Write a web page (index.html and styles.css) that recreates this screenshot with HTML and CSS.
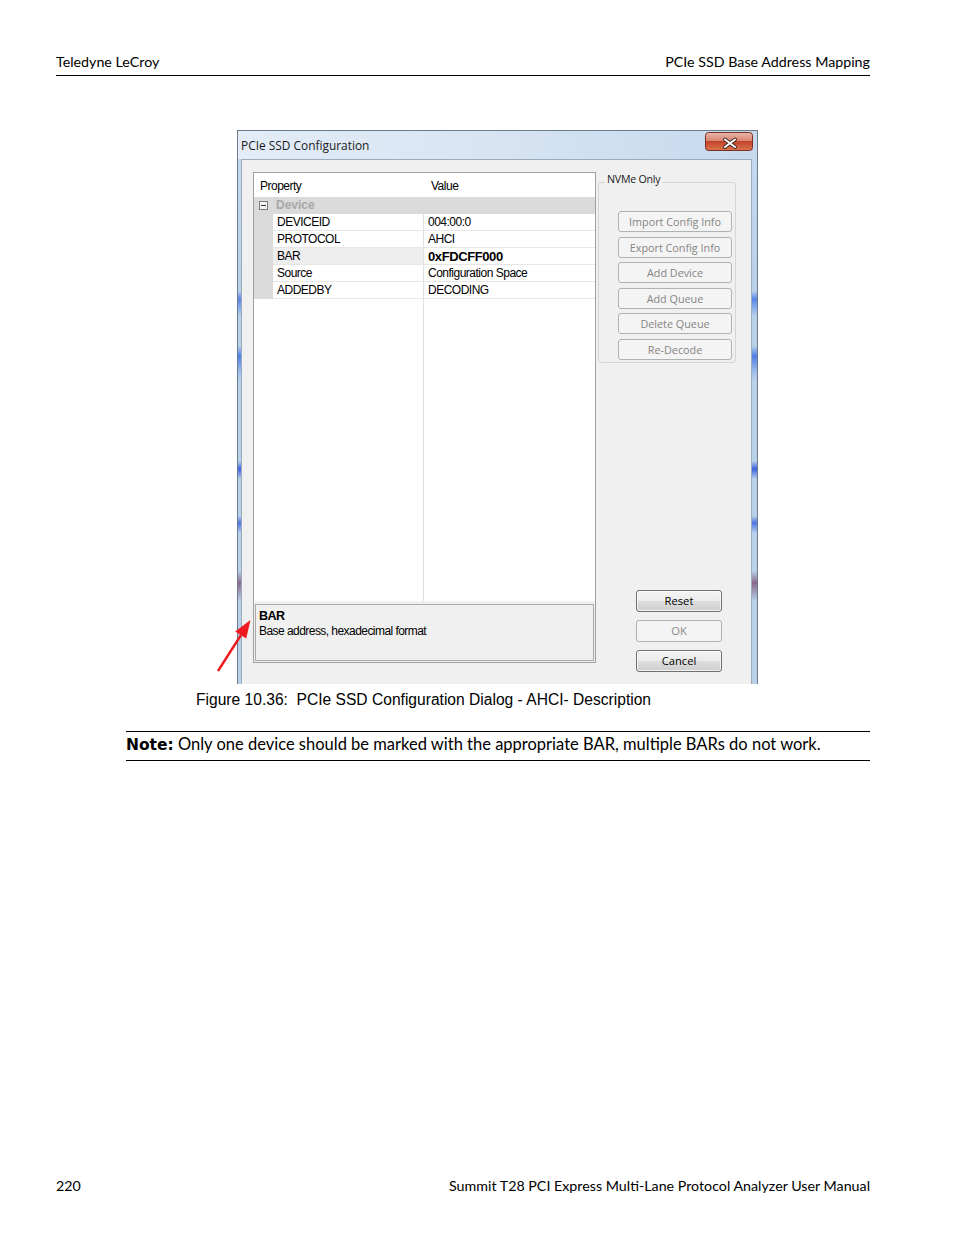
FILE: index.html
```html
<!DOCTYPE html>
<html lang="en">
<head>
<meta charset="utf-8">
<title>PCIe SSD Base Address Mapping</title>
<link rel="stylesheet" href="styles.css">
</head>
<body>
<div class="page">
  <header class="running-head"><span>Teledyne LeCroy</span><span>PCIe SSD Base Address Mapping</span></header>

  <div class="figure">
    <div class="dialog">
      <div class="titlebar">
        <span class="title">PCIe SSD Configuration</span>
        <div class="close">
          <svg width="48" height="19" viewBox="0 0 48 19">
            <defs>
              <linearGradient id="cg" x1="0" y1="0" x2="0" y2="1">
                <stop offset="0" stop-color="#ecb8ab"/>
                <stop offset="0.45" stop-color="#d98571"/>
                <stop offset="0.5" stop-color="#c4442b"/>
                <stop offset="1" stop-color="#d9744e"/>
              </linearGradient>
            </defs>
            <rect x="0.5" y="0.5" width="47" height="18" rx="3" fill="url(#cg)" stroke="#7a3124"/>
            <path d="M20 7.5 L30 15 M30 7.5 L20 15" stroke="#3d2019" stroke-width="3.8" stroke-linecap="round"/>
            <path d="M20 7.5 L30 15 M30 7.5 L20 15" stroke="#ffffff" stroke-width="2.1" stroke-linecap="round"/>
          </svg>
        </div>
      </div>
      <div class="client">
        <div class="grid-frame">
          <div class="grid">
            <div class="grid-head"><div class="hcell prop">Property</div><div class="hcell val">Value</div></div>
            <div class="cat-row"><span class="expander"></span><span class="cat-name">Device</span></div>
            <div class="row"><div class="gutter"></div><div class="cell name">DEVICEID</div><div class="cell value">004:00:0</div></div>
            <div class="row"><div class="gutter"></div><div class="cell name">PROTOCOL</div><div class="cell value">AHCI</div></div>
            <div class="row selected"><div class="gutter"></div><div class="cell name">BAR</div><div class="cell value strong">0xFDCFF000</div></div>
            <div class="row"><div class="gutter"></div><div class="cell name">Source</div><div class="cell value">Configuration Space</div></div>
            <div class="row"><div class="gutter"></div><div class="cell name">ADDEDBY</div><div class="cell value">DECODING</div></div>
            <div class="grid-empty"><div class="empty-left"></div><div class="empty-right"></div></div>
          </div>
          <div class="desc">
            <div class="desc-title">BAR</div>
            <div class="desc-text">Base address, hexadecimal format</div>
          </div>
        </div>
        <div class="side">
          <div class="group">
            <span class="group-label">NVMe Only</span>
            <button class="nbtn">Import Config Info</button>
            <button class="nbtn">Export Config Info</button>
            <button class="nbtn">Add Device</button>
            <button class="nbtn">Add Queue</button>
            <button class="nbtn">Delete Queue</button>
            <button class="nbtn">Re-Decode</button>
          </div>
          <div class="actions">
            <button class="btn">Reset</button>
            <button class="btn disabled">OK</button>
            <button class="btn">Cancel</button>
          </div>
        </div>
      </div>
    </div>
    <svg class="arrow" width="50" height="60" viewBox="0 0 50 60">
      <line x1="8" y1="56" x2="31" y2="20" stroke="#ee1a1f" stroke-width="2.4"/>
      <polygon points="40.5,5 25.2,16.6 36.2,23.6" fill="#ee1a1f"/>
    </svg>
  </div>

  <p class="caption">Figure 10.36:  PCIe SSD Configuration Dialog - AHCI- Description</p>

  <div class="note"><b class="note-label">Note:</b> Only one device should be marked with the appropriate BAR, multiple BARs do not work.</div>

  <footer class="running-foot"><span>220</span><span>Summit T28 PCI Express Multi-Lane Protocol Analyzer User Manual</span></footer>
</div>
</body>
</html>
```

FILE: styles.css
```css
body {
  margin: 0;
  background: #ffffff;
}

.page {
  width: 954px;
  height: 1235px;
  box-sizing: border-box;
  padding: 53px 84px 40px 56px;
  display: flex;
  flex-direction: column;
  font-family: Lato, "Open Sans", sans-serif;
  color: #000;
}

.running-head {
  display: flex;
  justify-content: space-between;
  font-size: 14.25px;
  line-height: 18px;
  padding-bottom: 4px;
  border-bottom: 1px solid #000;
}

.figure {
  position: relative;
  margin: 54px 0 0 181px;
  width: 521px;
}

.dialog {
  width: 521px;
  height: 554px;
  box-sizing: border-box;
  border: 1px solid #6b7a8c;
  border-bottom: none;
  display: flex;
  flex-direction: column;
  background: linear-gradient(to bottom,
    #d3e2f2 0, #c4d8ee 30px, #b9d0e9 160px,
    #5a86e8 168px, #8fb2ea 178px, #b9d0e9 185px,
    #b9d0e9 215px, #4f7fe6 225px, #9bbbe9 240px, #b9d0e9 250px,
    #b9d0e9 330px, #3d63e0 338px, #b9d0e9 348px,
    #b9d0e9 385px, #4a73e0 392px, #b9d0e9 402px,
    #b9d0e9 440px, #8a6a8a 452px, #b9d0e9 470px,
    #b9d0e9 100%);
}

.titlebar {
  height: 28px;
  flex: none;
  display: flex;
  justify-content: space-between;
  align-items: flex-start;
  padding: 0 4px 0 3px;
  background: linear-gradient(90deg, #e3ecf7 0%, #d8e5f3 45%, #c6d9ee 100%);
}

.title {
  font-family: "Open Sans", sans-serif;
  font-size: 11.9px;
  line-height: 28px;
  color: #1b1b1b;
}

.close {
  margin-top: 1px;
  width: 48px;
  height: 19px;
}

.close svg {
  display: block;
}

.client {
  flex: 1;
  margin: 0 5px 0 3px;
  border: 1px solid #9aabbd;
  border-bottom: none;
  background: #f0f0f0;
  display: flex;
  padding: 12px 0 0 11px;
}

.grid-frame {
  flex: none;
  width: 343px;
  height: 491px;
  box-sizing: border-box;
  border: 1px solid #a0a0a0;
  display: flex;
  flex-direction: column;
  background: #f0f0f0;
}

.grid {
  flex: 1;
  background: #ffffff;
  display: flex;
  flex-direction: column;
  font-family: "Liberation Sans", Arial, sans-serif;
  font-size: 12px;
  letter-spacing: -0.5px;
  color: #000;
}

.grid-head {
  height: 24px;
  flex: none;
  display: flex;
  align-items: center;
  padding-top: 2px;
  box-sizing: border-box;
}

.hcell.prop {
  width: 164px;
  padding-left: 6px;
}

.hcell.val {
  padding-left: 7px;
}

.cat-row {
  height: 17px;
  flex: none;
  background: #dadada;
  display: flex;
  align-items: center;
}

.expander {
  width: 7px;
  height: 7px;
  margin-left: 5px;
  border: 1px solid #7c7c7c;
  background: #f4f4f4;
  display: flex;
  align-items: center;
  justify-content: center;
}

.expander::before {
  content: "";
  width: 5px;
  height: 1px;
  background: #333;
}

.cat-name {
  margin-left: 8px;
  font-weight: bold;
  color: #a8a8a8;
  letter-spacing: 0;
  line-height: 17px;
}

.row {
  height: 17px;
  flex: none;
  display: flex;
}

.gutter {
  width: 19px;
  flex: none;
  background: #dadada;
}

.cell {
  box-sizing: border-box;
  border-bottom: 1px solid #e6e6e6;
  line-height: 17px;
  padding-left: 4px;
  white-space: nowrap;
}

.cell.name {
  width: 151px;
  flex: none;
  border-right: 1px solid #e0e0e0;
}

.row.selected .cell.name {
  background: #eeeeee;
}

.cell.value {
  flex: 1;
}

.cell.strong {
  font-weight: bold;
  font-size: 13px;
  letter-spacing: -0.4px;
}

.grid-empty {
  flex: 1;
  display: flex;
}

.empty-left {
  width: 169px;
  border-right: 1px solid #e0e0e0;
}

.desc {
  flex: none;
  height: 57px;
  box-sizing: border-box;
  margin: 3px 1px 1px;
  border: 1px solid #aaaaaa;
  padding: 4px 0 0 3px;
  font-family: "Liberation Sans", Arial, sans-serif;
  font-size: 12px;
  letter-spacing: -0.55px;
}

.desc-title {
  font-weight: bold;
  line-height: 14px;
  font-size: 12.5px;
}

.desc-text {
  line-height: 16px;
}

.side {
  margin-left: 2px;
  width: 138px;
  display: flex;
  flex-direction: column;
}

.group {
  position: relative;
  margin-top: 10px;
  height: 181px;
  box-sizing: border-box;
  border: 1px solid #d5d5d5;
  border-radius: 3px;
  padding: 28px 0 0 19px;
  display: flex;
  flex-direction: column;
  gap: 4.6px;
}

.group-label {
  position: absolute;
  top: -11px;
  left: 6px;
  padding: 0 2px;
  background: #f0f0f0;
  font-family: "Open Sans", sans-serif;
  font-size: 10.6px;
  line-height: 14px;
  letter-spacing: -0.2px;
  color: #1a1a1a;
}

.nbtn,
.btn {
  margin: 0;
  padding: 0;
  box-sizing: border-box;
  font-family: "Open Sans", sans-serif;
  border-radius: 3px;
  text-align: center;
}

.nbtn {
  width: 114px;
  height: 21px;
  line-height: 19px;
  font-size: 10.8px;
  border: 1px solid #adb2b5;
  background: #f4f4f4;
  color: #858585;
}

.actions {
  margin-top: 227px;
  margin-left: 38px;
  display: flex;
  flex-direction: column;
  gap: 8px;
}

.btn {
  width: 86px;
  height: 22px;
  line-height: 20px;
  font-size: 11.2px;
  border: 1px solid #707070;
  color: #000;
  background: linear-gradient(to bottom, #f3f3f3 0%, #ebebeb 50%, #dddddd 52%, #cfcfcf 100%);
  box-shadow: inset 0 0 0 1px rgba(255, 255, 255, 0.7);
}

.btn.disabled {
  border-color: #adb2b5;
  background: #f4f4f4;
  color: #8a8a8a;
  box-shadow: none;
}

.arrow {
  position: absolute;
  left: -27px;
  top: 485px;
}

.caption {
  margin: 7px 0 0 140px;
  font-family: "Liberation Sans", Arial, sans-serif;
  font-size: 15.6px;
  line-height: 18px;
  white-space: pre;
}

.note {
  margin: 22px 0 0 70px;
  border-top: 1px solid #000;
  border-bottom: 1px solid #000;
  padding: 2px 0 5px;
  font-size: 16.5px;
  line-height: 20px;
}

.note-label {
  font-family: "DejaVu Sans", Verdana, sans-serif;
  font-weight: bold;
  font-size: 15.5px;
}

.running-foot {
  margin-top: auto;
  display: flex;
  justify-content: space-between;
  font-size: 14.25px;
  line-height: 18px;
}
```
